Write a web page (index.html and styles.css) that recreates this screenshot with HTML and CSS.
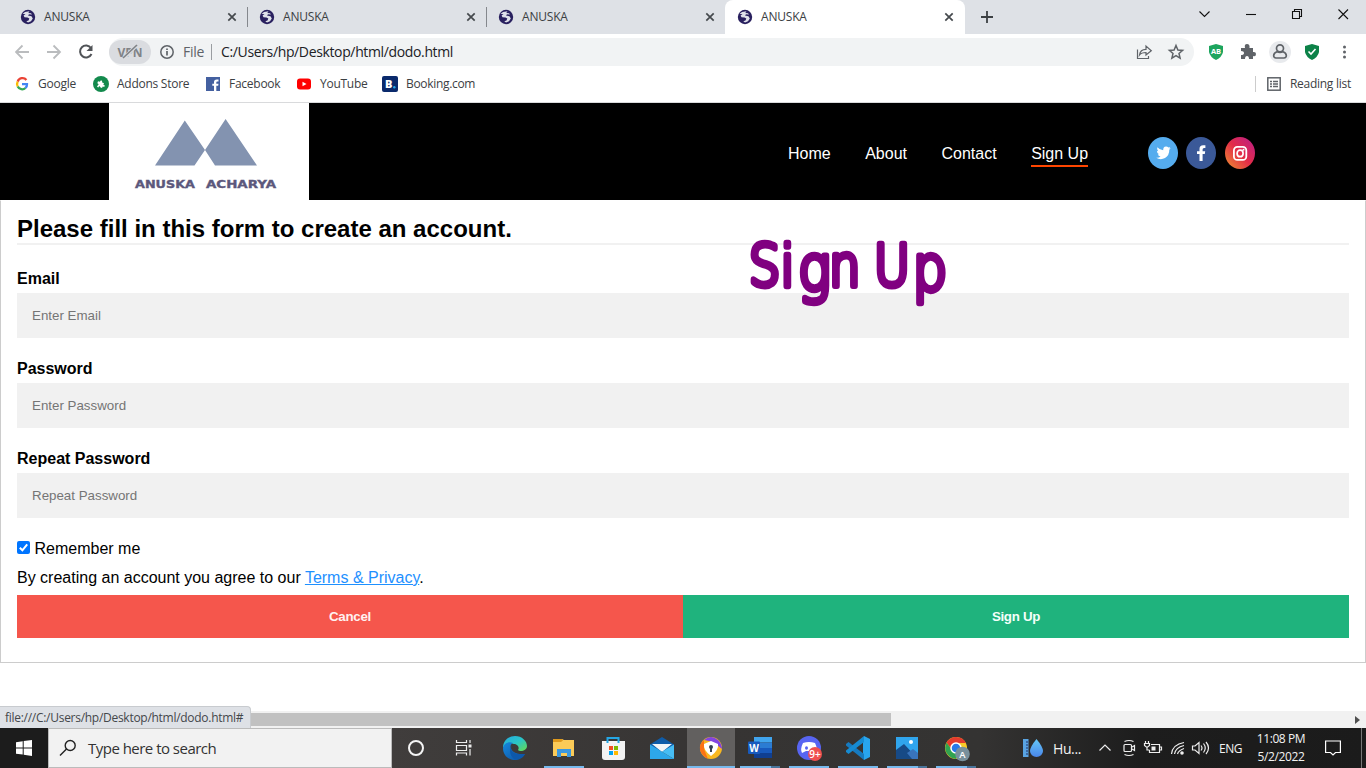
FILE: index.html
```html
<!DOCTYPE html>
<html lang="en">
<head>
<meta charset="utf-8">
<title>ANUSKA</title>
<link rel="stylesheet" href="styles.css">
</head>
<body>
<svg class="defs" width="0" height="0">
  <defs>
    <symbol id="globe" viewBox="0 0 16 16"><circle cx="8" cy="8" r="7.200" fill="#29205f"/><path d="M2.500 5L5 3L9.500 2.300L8.300 4L11 4.300L12 5.500L9 5.300L8 6.500L11.500 7.300L12.800 9.500L11 12.300L8 13.600L6.300 12.300L8.500 11.500L9.300 9.600L7.500 8.600L4.500 8.300L3.600 6.500L5.500 5Z" fill="#dfe1ea"/></symbol>
    <symbol id="close" viewBox="0 0 10 10"><path d="M1.300 1.300L8.700 8.700M8.700 1.300L1.300 8.700" stroke="#45494d" stroke-width="1.700" fill="none"/></symbol>
    <linearGradient id="ig" x1="0" y1="1" x2="1" y2="0"><stop offset="0" stop-color="#ee9330"/><stop offset=".5" stop-color="#e32c48"/><stop offset="1" stop-color="#b81d8c"/></linearGradient>
    <linearGradient id="edgeTop" x1="0" y1="0" x2="1" y2="1"><stop offset="0" stop-color="#25a9e0"/><stop offset=".5" stop-color="#2ac5c8"/><stop offset="1" stop-color="#67dc4d"/></linearGradient>
    <linearGradient id="edgeLow" x1="0" y1="0" x2="1" y2="1"><stop offset="0" stop-color="#1589df"/><stop offset="1" stop-color="#0d4f9e"/></linearGradient>
    <linearGradient id="drop" x1="0" y1="0" x2="0" y2="1"><stop offset="0" stop-color="#65c8f8"/><stop offset="1" stop-color="#4a86ea"/></linearGradient>
  </defs>
</svg>

<div class="tabstrip">
  <div class="tab"><svg class="fav"><use href="#globe"/></svg><span>ANUSKA</span><svg class="x"><use href="#close"/></svg></div>
  <div class="tab"><svg class="fav"><use href="#globe"/></svg><span>ANUSKA</span><svg class="x"><use href="#close"/></svg></div>
  <div class="tab last"><svg class="fav"><use href="#globe"/></svg><span>ANUSKA</span><svg class="x"><use href="#close"/></svg></div>
  <div class="tab active"><svg class="fav"><use href="#globe"/></svg><span>ANUSKA</span><svg class="x"><use href="#close"/></svg></div>
  <svg class="plus" width="12" height="12"><path d="M6 0V12M0 6H12" stroke="#3c4043" stroke-width="1.800"/></svg>
  <svg class="winctl" width="160" height="28" fill="none" stroke="#111" stroke-width="1.100"><path d="M4.500 11.500L9.500 16.500L14.500 11.500"/><path d="M51 14.500H61"/><path d="M97.500 11.500H104.500V18.500H97.500ZM99.500 11V9.500H106.500V16.500H105"/><path d="M143.500 9.500L153 19M153 9.500L143.500 19"/></svg>
</div>

<div class="toolbar">
  <svg class="navicons" width="94" height="20" fill="none" stroke-width="1.800"><path d="M14 10H1M7.500 3.500L1 10L7.500 16.500" stroke="#babcbe"/><path d="M32 10H45M38.500 3.500L45 10L38.500 16.500" stroke="#babcbe"/><path d="M76 6A6 6 0 1 0 76.500 12" stroke="#505357" stroke-width="2"/><path d="M77.500 3V9H71.500Z" fill="#505357"/></svg>
  <div class="omnibox">
    <div class="vpn"><b>VPN</b><svg width="24" height="18"><path d="M6.500 14.500L18 3" stroke="#dadce0" stroke-width="3.500"/><path d="M5 15L19 2" stroke="#808387" stroke-width="1.700"/></svg></div>
    <svg width="14" height="14" fill="none" stroke="#5f6368"><circle cx="7" cy="7" r="6.200" stroke-width="1.500"/><path d="M7 6V10.500M7 3.400V5" stroke-width="1.700"/></svg>
    <span class="file">File</span><i></i><span class="url">C:/Users/hp/Desktop/html/dodo.html</span>
    <svg class="share" width="50" height="18" fill="none" stroke="#5f6368" stroke-width="1.200"><path d="M2.500 6.500V15.500H13.500V13M4.500 12C5 8 7.500 6.300 11 6.300V3L16.300 7.700L11 12V9.500C8 9.500 6 10 4.500 12Z"/><path d="M41 2.500L42.900 7L47.600 7.400L44 10.500L45.100 15.200L41 12.700L36.900 15.200L38 10.500L34.400 7.400L39.100 7Z" stroke-width="1.500"/></svg>
  </div>
  <svg class="ext" width="160" height="28"><path d="M7 8L14 6L21 8V14Q20 19 14 22Q8 19 7 14Z" fill="#1da55e"/><text x="14" y="16" font-size="7.500" font-weight="700" text-anchor="middle" fill="#fff">AB</text><path d="M39 10H43Q42 6 45 6Q48 6 47.500 10H51V14Q54 13.500 54 16Q54 19 51 18V21H47Q47 18 45 18Q43 18 43 21H39V17Q42 17 42 15Q42 13 39 13Z" fill="#5f6368"/><circle cx="78" cy="14" r="11" fill="#e8eaed"/><g fill="none" stroke="#5f6368" stroke-width="1.700"><circle cx="78" cy="10.300" r="3.500"/><path d="M75 13.800C70.500 15.500 71 20 74 20H82C85 20 85.500 15.500 81 13.800Q78 15 75 13.800Z"/></g><path d="M103 8L110 6L117 8V14Q116 19 110 22Q104 19 103 14Z" fill="#0c8248"/><path d="M106.500 13.500L109 16L113.500 11" stroke="#fff" stroke-width="1.600" fill="none"/><g fill="#5f6368"><circle cx="142.500" cy="9" r="1.500"/><circle cx="142.500" cy="14" r="1.500"/><circle cx="142.500" cy="19" r="1.500"/></g></svg>
</div>

<div class="bookmarks">
  <svg width="16" height="16" viewBox="0 0 16 16" fill="none" stroke-width="2.300"><path d="M12.400 4A5 5 0 0 0 3.700 5.600" stroke="#ea4335"/><path d="M3.700 5.600A5 5 0 0 0 3.700 10.500" stroke="#fbbc05"/><path d="M3.700 10.500A5 5 0 0 0 11.500 12" stroke="#34a853"/><path d="M8 8.200H13A5 5 0 0 1 11.500 12" stroke="#4285f4"/></svg><span class="b1">Google</span>
  <svg width="16" height="16"><circle cx="8" cy="8" r="8" fill="#138a4d"/><path d="M5 5.200L7 5.800Q7.300 4 8.600 4.500Q9.700 5 8.900 6.300L11 7.200L10.300 8.800Q12.300 9 11.700 10.300Q11 11.300 9.700 10.500L9 12L7.200 11.300Q7.200 9.700 6 10.300L5.400 11.500L4 10.800L5 8.900Q6.300 8.500 5.200 7.700L4.300 7.300Z" fill="#fff"/></svg><span class="b2">Addons Store</span>
  <svg width="16" height="16"><rect x="1" y="1" width="14" height="14" fill="#4460a0"/><path d="M9 15V9.800H7.300V7.700H9V6Q9 3.400 11.700 3.400H13.500V5.500H12.300Q11.300 5.500 11.300 6.500V7.700H13.500L13.200 9.800H11.300V15Z" fill="#fff"/></svg><span class="b3">Facebook</span>
  <svg width="16" height="16"><rect x="1" y="2.500" width="14" height="11" rx="3" fill="#f00"/><path d="M6.500 5.700L10.500 8L6.500 10.300Z" fill="#fff"/></svg><span class="b4">YouTube</span>
  <svg width="16" height="16"><rect width="16" height="16" rx="2" fill="#0a2a6c"/><text x="3" y="12.200" font-size="11" font-weight="800" fill="#fff">B</text><circle cx="12.300" cy="11.300" r="1.200" fill="#21a8e8"/></svg><span class="b5">Booking.com</span>
  <div class="reading"><svg width="14" height="14" fill="none" stroke="#5f6368" stroke-width="1.500"><rect x=".8" y=".8" width="12.400" height="12.400"/><path d="M3 4.500H5M6 4.500H11M3 7H5M6 7H11M3 9.500H5M6 9.500H11"/></svg><span>Reading list</span></div>
</div>

<header class="site">
  <div class="logo"><svg width="200" height="97"><path d="M46 62.500L75.800 17.500L96 47L85.500 62.500ZM96 47L116.600 16L148 62.500H106Z" fill="#8393b0"/><text y="84.700" font-size="10" font-weight="700" fill="#5c587c" stroke="#5c587c" stroke-width=".35"><tspan x="26" textLength="60" lengthAdjust="spacingAndGlyphs">ANUSKA</tspan><tspan x="97" textLength="70" lengthAdjust="spacingAndGlyphs">ACHARYA</tspan></text></svg></div>
  <nav><a>Home</a><a>About</a><a>Contact</a><a class="on">Sign Up</a></nav>
  <div class="social">
    <svg viewBox="0 0 30 32"><ellipse cx="15" cy="16" rx="15" ry="16" fill="#55acee"/><path d="M8.200 20.700Q11 21 12.500 19.500Q10.300 19 9.800 17.300H11.100Q8.800 16.200 8.900 13.800L10.200 14.200Q8.400 12.500 9.400 10.200Q11.800 13.100 15.200 13.200Q15 9.700 18 9.500Q19.500 9.500 20.400 10.500L22.200 9.900L21.200 11.600L22.700 11.200L21.300 12.800Q21.400 18.500 17 21Q12.500 23.400 8.200 20.700Z" fill="#fff"/></svg>
    <svg viewBox="0 0 30 32"><ellipse cx="15" cy="16" rx="15" ry="16" fill="#3b5998"/><path d="M13.500 24V17H11V14.300H13.500V12Q13.500 8.300 17.200 8.300H19.400V11H18Q16.600 11 16.600 12.500V14.300H19.200L18.800 17H16.600V24Z" fill="#fff"/></svg>
    <svg viewBox="0 0 30 32"><ellipse cx="15" cy="16" rx="15" ry="16" fill="url(#ig)"/><rect x="8.900" y="9.900" width="12.400" height="13" rx="3.500" fill="none" stroke="#fff" stroke-width="1.800"/><ellipse cx="15.100" cy="16.400" rx="3" ry="3.300" fill="none" stroke="#fff" stroke-width="1.700"/><circle cx="18.500" cy="12.700" r="1" fill="#fff"/></svg>
  </div>
</header>

<main>
  <form class="signup">
    <h1>Please fill in this form to create an account.</h1>
    <hr>
    <label>Email</label><input type="text" placeholder="Enter Email">
    <label>Password</label><input type="text" placeholder="Enter Password">
    <label>Repeat Password</label><input type="text" placeholder="Repeat Password">
    <div class="remember"><svg width="13" height="13"><rect width="13" height="13" rx="2" fill="#0075ff"/><path d="M2.800 6.700L5.400 9.300L10.200 3.300" fill="none" stroke="#fff" stroke-width="2"/></svg><span>Remember me</span></div>
    <p>By creating an account you agree to our <a>Terms &amp; Privacy</a>.</p>
    <div class="buttons"><button type="button" class="cancel">Cancel</button><button type="button">Sign Up</button></div>
  </form>
  <svg class="script" width="230" height="110"><text transform="scale(.86 1)" y="66"><tspan x="11.500 48.500">Si</tspan><tspan class="tall" x="69" y="70">g</tspan><tspan x="105 157" y="66">nU</tspan><tspan class="tall" x="202" y="70">p</tspan></text></svg>
  <div class="status">file:///C:/Users/hp/Desktop/html/dodo.html#</div>
</main>

<div class="scroll"><div class="thumb"></div><svg width="5" height="8"><path d="M0 0L5 4L0 8Z" fill="#505050"/></svg></div>

<footer>
  <div class="start"><svg width="16" height="16" fill="#fff"><path d="M0 2.200L6.700 1.300V7.400H0ZM7.700 1.100L16 0V7.400H7.700ZM0 8.400H6.700V14.600L0 13.700ZM7.700 8.400H16V16L7.700 14.800Z"/></svg></div>
  <div class="search"><svg width="18" height="18" fill="none" stroke="#222" stroke-width="1.400"><circle cx="11.200" cy="6.500" r="5"/><path d="M7.500 10L1 16.500"/></svg><span>Type here to search</span></div>
  <div class="app"><svg><circle cx="12" cy="12" r="7" fill="none" stroke="#f4f4f4" stroke-width="2"/></svg></div>
  <div class="app view"><svg fill="none" stroke="#eee" stroke-width="1.200"><path d="M4.500 4V6.500H14.500V4M4.500 19.500V17H14.500V19.500M4.500 9.500H14.500V14.500H4.500ZM18 4V7M18 13V19.500"/><path d="M16.500 8.500H19.500V11.500H16.500Z" fill="#eee" stroke="none"/></svg></div>
  <div class="app"><svg><path d="M0 12C0 4 6 0 12 0C19 0 24 5 24 10C24 15 17 16 15 14C17 11 14 8 11 8C6 6 2 8 0 12Z" fill="url(#edgeTop)"/><path d="M0 12C1 7 6 5 10 7C5 9 7 19 22 18C20 22 16 24 12 24C5 24 0 19 0 12Z" fill="url(#edgeLow)"/><path d="M10 8C5 13 10 20 22 18C19 22 15 24 11 23C6 19 6 12 10 8Z" fill="#0d58ab"/></svg></div>
  <div class="app open"><svg><path d="M1 3H10L12 4H22V20H1Z" fill="#fbcb58"/><path d="M1 3H10L11 4.500L9 6H1Z" fill="#e09a1d"/><path d="M5 13H19V21H15V17H9V21H5Z" fill="#3b98df"/></svg></div>
  <div class="app"><svg><path d="M6.500 7V2H17.500V7" fill="none" stroke="#25a7e5" stroke-width="2"/><path d="M1 5H24V21Q24 24 21 24H4Q1 24 1 21Z" fill="#f3f3f3"/><path d="M6.500 5V7M17.500 5V7" stroke="#25a7e5" stroke-width="2"/><path d="M8 10H12V14H8Z" fill="#f25022"/><path d="M13 10H17V14H13Z" fill="#7fba00"/><path d="M8 15H12V19H8Z" fill="#00a4ef"/><path d="M13 15H17V19H13Z" fill="#ffb900"/></svg></div>
  <div class="app"><svg><path d="M0 8.500L12 1L24 8.500V15H0Z" fill="#0f5ca8"/><path d="M2 8H22L12 16Z" fill="#f2f5f7"/><path d="M0 8.500L24 23H0Z" fill="#2da7ea"/><path d="M24 8.500L12 15.800L24 23Z" fill="#47bdf4"/></svg></div>
  <div class="app open current"><svg><circle cx="12" cy="12" r="11" fill="#f9b820"/><path d="M5 4Q12 -2 19 4Q23 8 23 13Q15 5 5 4Z" fill="#8244e0"/><path d="M5 4Q0 8 1 14Q3 20 9 23L5 13Z" fill="#fb7215"/><path d="M5 8L12 5L19 8Q20 14 12 20Q4 14 5 8Z" fill="#fff"/><circle cx="12" cy="11" r="2" fill="#354052"/><path d="M11 12H13V16H11Z" fill="#354052"/></svg></div>
  <div class="app open multi"><svg><path d="M6 1H24V6.500H6Z" fill="#41a5ee"/><path d="M6 6.500H24V12H6Z" fill="#2b7cd3"/><path d="M6 12H24V17H6Z" fill="#185abd"/><path d="M6 17H24V22H6Z" fill="#103f91"/><rect y="5.500" width="12" height="12.500" rx="1" fill="#185abd"/><text x="6" y="15.500" font-size="10" font-weight="700" fill="#fff" text-anchor="middle">W</text></svg></div>
  <div class="app open"><svg><circle cx="12" cy="12" r="12" fill="#5865f2"/><path d="M6 7Q12 5 18 7Q21 13 19 17L15 15H9L5 17Q3 13 6 7Z" fill="#fff"/><ellipse cx="9.500" cy="12" rx="1.500" ry="1.800" fill="#5865f2"/><circle cx="18" cy="18" r="7" fill="#f05050"/><text x="18" y="21.500" font-size="10" font-weight="600" fill="#fff" text-anchor="middle">9+</text></svg></div>
  <div class="app open"><svg><path d="M18 0L24 3V21L18 24L17 17V7Z" fill="#28a5ee"/><path d="M0 8L2.500 6L18 18V24L0 9.500Z" fill="#167abf"/><path d="M0 16L2.500 18L18 6V0L0 14.500Z" fill="#168bd2"/></svg></div>
  <div class="app open multi"><svg><path d="M1 1H23V23H1Z" fill="#30a5ed"/><path d="M1 14L9 8L23 23H1Z" fill="#174a86"/><path d="M12 17L18 13L23 17V23H17Z" fill="#3974bc"/><circle cx="16" cy="6" r="2" fill="#fff"/></svg></div>
  <div class="app open multi"><svg><g transform="translate(1 0)"><circle cx="11" cy="12" r="11" fill="#f9c928"/><path d="M1.500 6.500Q5 1 11 1Q18 1 21 7H11L7 14Z" fill="#e33b2e"/><path d="M1.500 6.500Q-2 15 4 20Q7 23 11 23L15 15L7 14Z" fill="#31a350"/><circle cx="11" cy="12" r="5" fill="#2879e8" stroke="#fff" stroke-width="1.500"/><circle cx="17.500" cy="18" r="7.300" fill="#78909c"/><text x="17.500" y="21.500" font-size="9.500" font-weight="600" fill="#fff" text-anchor="middle">A</text></g></svg></div>
  <div class="tray">
    <svg class="weather" width="20" height="18"><rect width="5.500" height="18" fill="#59a4e2"/><path d="M3 3H5M3 6H5M3 9H5M3 12H5M3 15H5" stroke="#23306d"/><path d="M13.500 0Q20 8 20 12A6.500 6 0 0 1 7 12Q7 8 13.500 0Z" fill="url(#drop)"/></svg>
    <span class="hu">Hu...</span>
    <svg class="icons" width="112" height="20" fill="none" stroke="#eee" stroke-width="1.200"><path d="M1.500 12.500L7 7L12.500 12.500"/><path d="M26.500 3.500Q31 1.500 35.500 3.500M26.500 16.500Q31 18.500 35.500 16.500"/><rect x="26" y="6.500" width="7.500" height="7" rx="1"/><path d="M34 9L36.500 7.500V12.500L34 11"/><path d="M53 6.500H61.500V14.500H51.500V12M62 9H63.500V12H62M47.500 3V5M50.500 3V5M46.500 5.500H51.500V7.500L49 9.500L46.500 7.500ZM49 9.500V12H51.500"/><path d="M53.500 8.500H57.500V12.500H53.500Z" fill="#eee" stroke="none"/><path d="M73.500 16Q74.500 6.500 86 4.500M76.500 16Q77.500 9.500 86 7.500M79.500 16Q80.500 12.500 86 10.500"/><circle cx="84" cy="15" r="1.800" fill="#eee" stroke="none"/><path d="M94.500 8H97L101 4.500V15.500L97 12H94.500ZM103 7.500Q105 10 103 12.500M105.500 5.500Q109 10 105.500 14.500M108 4Q113 10 108 16"/></svg>
    <span class="eng">ENG</span>
    <div class="clock"><span>11:08 PM</span><span>5/2/2022</span></div>
    <svg class="note" width="16" height="17" fill="none" stroke="#fff" stroke-width="1.200"><path d="M.6 1H15.400V12.500H10.500L8 15L5.500 12.500H.6Z"/></svg>
    <i class="desk"></i>
  </div>
</footer>
</body>
</html>
```
FILE: styles.css
```css
* { box-sizing: border-box; }
body { margin: 0; width: 1366px; height: 768px; overflow: hidden; display: flex; flex-direction: column; background: #fff; font-family: "Open Sans", "Noto Sans", sans-serif; font-size: 12px; color: #3c4043; }
svg { flex: none; display: block; }
svg text { font-family: "Open Sans", sans-serif; }
span { white-space: nowrap; }
.defs { position: absolute; }

.tabstrip { height: 34px; flex: none; background: #dee1e6; display: flex; align-items: center; padding-left: 8px; }
.tab { width: 239px; height: 34px; display: flex; align-items: center; padding: 0 10px 2px 12px; border-radius: 8px 8px 0 0; position: relative; }
.tab::after { content: ""; position: absolute; right: -1px; top: 7px; width: 1px; height: 20px; background: #85888d; }
.tab.last::after, .tab.active::after { display: none; }
.tab.active { width: 240px; background: #fff; padding-right: 11px; }
.tab span { flex: 1; margin-left: 8px; letter-spacing: -.2px; }
.tab svg { margin-top: 2px; }
.fav { width: 16px; height: 16px; }
.x { width: 10px; height: 10px; }
.plus { margin-left: 16px; }
.tabstrip .winctl { align-self: flex-start; margin-left: auto; margin-right: 11px; }

.toolbar { height: 36px; flex: none; display: flex; align-items: center; padding-left: 15px; }
.omnibox { width: 1085px; height: 28px; border-radius: 14px; background: #f1f3f4; display: flex; align-items: center; font-size: 14px; }
.omnibox > span { margin-bottom: 1px; }
.vpn { width: 42px; height: 24px; border-radius: 12px; background: #dadce0; margin-right: 9px; display: grid; place-items: center; font-size: 12px; letter-spacing: -.1px; color: #808387; }
.vpn > * { grid-area: 1 / 1; }
.file { margin-left: 9px; width: 21px; color: #5f6368; letter-spacing: -.3px; }
.omnibox i { width: 1px; height: 16px; background: #9a9da1; margin: 0 9px 0 7px; }
.url { color: #202124; letter-spacing: -.36px; }
.share { margin-left: auto; margin-right: 9px; }
.ext { margin-left: 8px; }

.bookmarks { height: 33px; flex: none; border-bottom: 1px solid #d9dadc; display: flex; align-items: center; padding: 0 15px 4px 14px; letter-spacing: -.26px; }
.bookmarks span { margin-bottom: 1px; }
.bookmarks > span { margin-left: 8px; }
.b1 { width: 55px; } .b2 { width: 88px; } .b3 { width: 67px; } .b4 { width: 62px; }
.b5 { letter-spacing: -.32px; }
.reading { height: 16px; margin-left: auto; border-left: 1px solid #ccc; display: flex; align-items: center; padding-left: 11px; gap: 9px; }

.site { height: 97px; flex: none; background: #000; display: flex; align-items: center; padding-left: 109px; font-family: "Liberation Sans", Arial, sans-serif; }
.logo { width: 200px; height: 97px; background: #fff; }
.logo text { font-family: "DejaVu Sans", sans-serif; }
nav { margin-left: 479px; width: 360px; display: flex; gap: 34.500px; color: #fff; font-size: 16px; line-height: 18px; padding-top: 8px; }
nav a { padding-bottom: 2px; border-bottom: 2px solid transparent; white-space: nowrap; }
nav a.on { border-color: #ff4500; }
.social { display: flex; gap: 8px; padding-top: 2px; }
.social svg { width: 30px; height: 32px; }
.social svg:last-child { margin-left: 1px; }

main { height: 511px; flex: none; position: relative; font: 16px "Liberation Sans", Arial, sans-serif; color: #000; }
.signup { height: 463px; border: 1px solid #ccc; border-top-color: transparent; padding: 14px 16px 0; display: flex; flex-direction: column; }
h1 { margin: 0; font-size: 24px; line-height: 28px; }
hr { width: 100%; height: 2px; flex: none; border: 0; background: #f1f1f1; margin: 0 0 3px; }
label { margin-top: 16px; line-height: 29px; font-weight: bold; }
input { width: 100%; height: 45px; flex: none; border: 0; background: #f1f1f1; padding: 15px; font: 13.333px "Liberation Sans", Arial, sans-serif; }
input::placeholder { color: #757575; }
.remember { margin-top: 16px; height: 29px; display: flex; align-items: center; gap: 4.500px; }
.remember svg { margin-bottom: 2px; }
p { margin: 0; line-height: 29px; }
p a { color: #1e90ff; text-decoration: underline; }
.buttons { display: flex; margin-top: 3px; }
button { flex: 1; height: 43px; border: 0; background: #1fb37d; color: #f4fffa; font: bold 13.333px "Liberation Sans", Arial, sans-serif; letter-spacing: -.3px; }
.cancel { background: #f5564c; color: #fff1f0; }
.script { position: absolute; left: 739px; top: 20px; overflow: visible; }
.script text { font-family: "DejaVu Sans", Inter, sans-serif; font-weight: 200; font-size: 57px; fill: #800080; stroke: #800080; stroke-width: 6.500px; stroke-linejoin: round; stroke-linecap: round; }
.script .tall { font-size: 63px; }
.status { position: absolute; left: 0; bottom: -17px; z-index: 2; width: 251px; height: 22px; border: solid #c8cbcf; border-width: 1px 1px 0 0; border-radius: 0 4px 0 0; background: #dee1e6; padding-left: 5px; font: 12px/21px "Open Sans", sans-serif; letter-spacing: -.28px; color: #44474b; white-space: nowrap; }

.scroll { height: 17px; flex: none; background: #f1f1f1; display: flex; align-items: center; justify-content: space-between; padding: 0 6px 0 17px; }
.thumb { width: 874px; height: 13px; background: #c1c1c1; }

footer { height: 40px; flex: none; display: flex; background: linear-gradient(90deg, #1c1c1c 0, #1c1c1c 48px, #403d3c 392px, #363433 720px, #343332 980px, #1d1d1d 1140px, #1b1b1b); color: #f3f3f3; }
.start { width: 48px; display: grid; place-items: center; }
.search { width: 344px; border: 1px solid #bbb; background: #f2f2f2; display: flex; align-items: center; padding-left: 10px; gap: 11px; font-size: 15px; color: #333; letter-spacing: -.52px; }
.app { width: 48px; margin-right: 1px; flex: none; display: flex; justify-content: center; align-items: center; }
.app svg { width: 24px; height: 24px; overflow: visible; }
.search + .app { margin-right: 0; }
.view { margin-right: 3px; }
.open { background: linear-gradient(#76b9ed, #76b9ed) center bottom / 40px 2px no-repeat; }
.current { background: linear-gradient(#76b9ed, #76b9ed) center bottom / 48px 2px no-repeat #62605f; }
.multi { background: linear-gradient(90deg, #76b9ed 31px, #49749a 31px) center bottom / 40px 2px no-repeat; }
.tray { flex: 1; display: flex; align-items: center; padding-left: 42px; }
.hu { margin-left: 10px; width: 45px; font-size: 14px; letter-spacing: -.4px; }
.eng { margin-left: 9px; width: 30px; letter-spacing: -.5px; }
.clock { width: 64px; display: flex; flex-direction: column; align-items: center; line-height: 18px; letter-spacing: -.4px; padding-bottom: 1px; }
.note { margin-left: 12px; }
.desk { width: 1px; height: 40px; background: #777; margin-left: 20px; }
```
